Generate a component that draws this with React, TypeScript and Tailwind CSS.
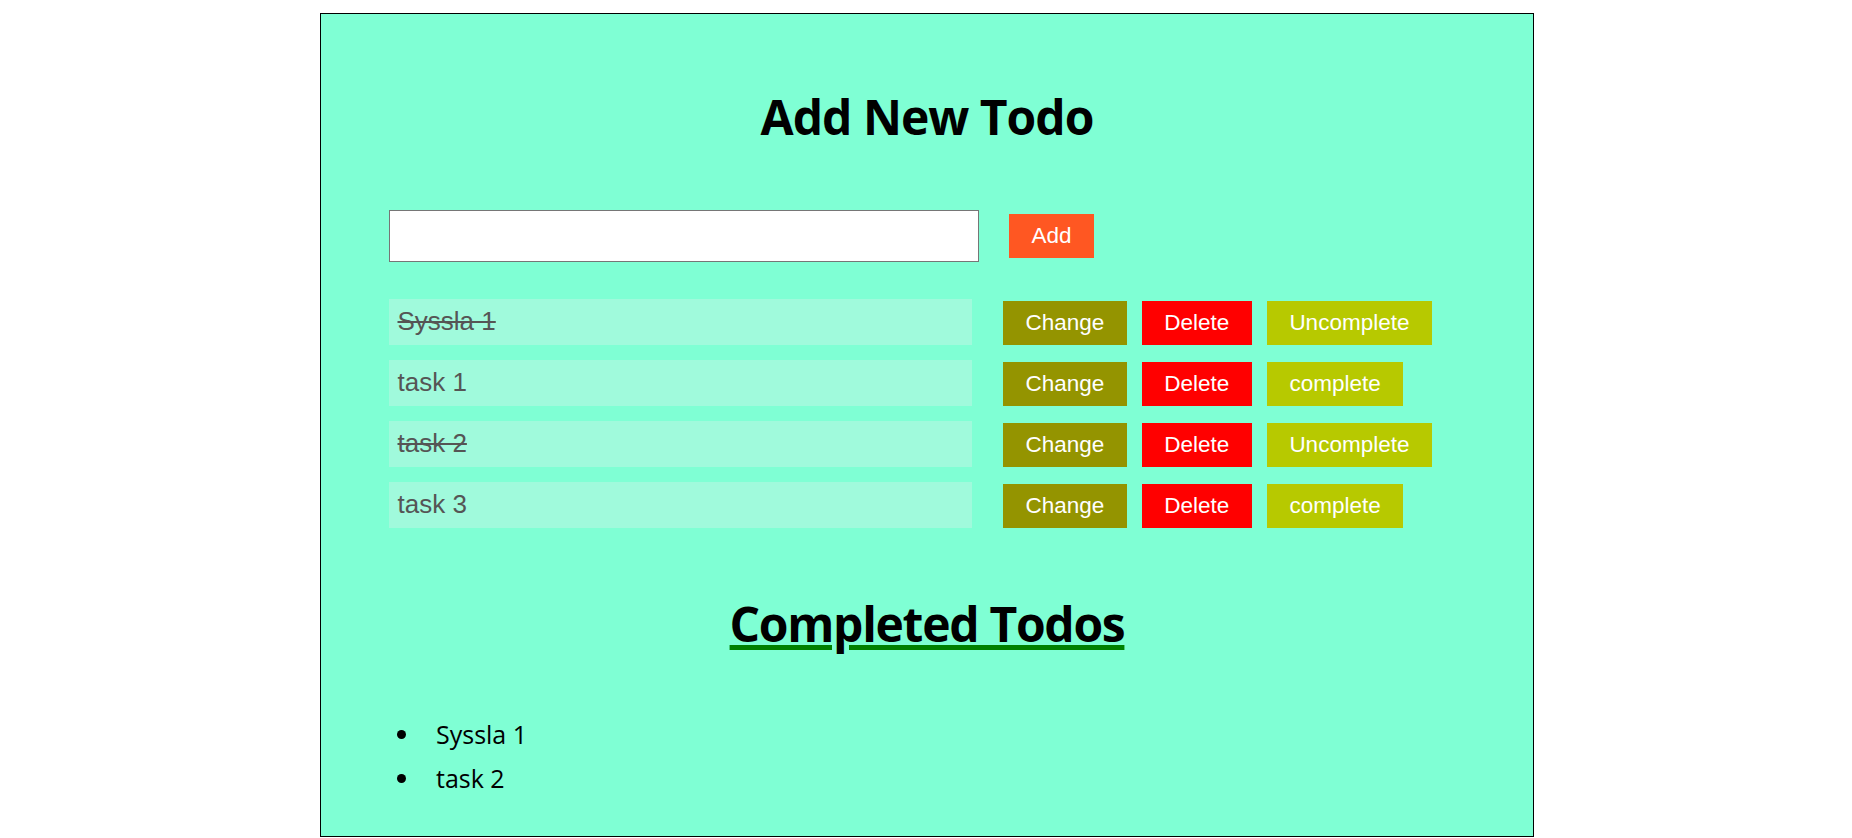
import { useState } from 'react';

type Todo = { id: number; text: string; done: boolean };

const INITIAL_TODOS: Todo[] = [
  { id: 1, text: 'Syssla 1', done: true },
  { id: 2, text: 'task 1', done: false },
  { id: 3, text: 'task 2', done: true },
  { id: 4, text: 'task 3', done: false },
];

const BUTTON_BASE =
  "px-[22.5px] py-[9px] text-[22.5px] leading-[1.149] text-white font-['Liberation_Sans',Arial,sans-serif]";

export default function App() {
  const [todos, setTodos] = useState<Todo[]>(INITIAL_TODOS);
  const [draft, setDraft] = useState('');

  function addTodo() {
    const text = draft.trim();
    if (!text) return;
    setTodos((prev) => [...prev, { id: Date.now(), text, done: false }]);
    setDraft('');
  }

  function toggle(id: number) {
    setTodos((prev) => prev.map((t) => (t.id === id ? { ...t, done: !t.done } : t)));
  }

  function remove(id: number) {
    setTodos((prev) => prev.filter((t) => t.id !== id));
  }

  function change(id: number) {
    const text = draft.trim();
    if (!text) return;
    setTodos((prev) => prev.map((t) => (t.id === id ? { ...t, text } : t)));
    setDraft('');
  }

  const completed = todos.filter((t) => t.done);

  return (
    <div className="min-h-screen bg-white pt-[13px]">
      <div className="ml-[320px] w-[1214px] border border-black bg-[#7fffd4] pb-[36px] pl-[68px] pt-[70px]">
        <h1 className="mr-[68px] text-center font-['Open_Sans',sans-serif] text-[48px] font-bold leading-[65.4px] tracking-[-1px] text-black">
          Add New Todo
        </h1>

        <div className="mt-[61px] flex items-center gap-[30px]">
          <input
            value={draft}
            onChange={(e) => setDraft(e.target.value)}
            className="h-[52px] w-[590px] border border-[#767676] bg-white px-2 text-[26px] font-['Liberation_Sans',Arial,sans-serif] outline-none"
          />
          <button type="button" onClick={addTodo} className={`${BUTTON_BASE} bg-[#ff5722]`}>
            Add
          </button>
        </div>

        <div className="mt-[37px] flex flex-col gap-[15px]">
          {todos.map((todo) => (
            <div key={todo.id} className="flex items-baseline">
              <div
                className={`w-[583px] bg-[#a0fadc] px-[8.5px] py-[8px] text-[26px] leading-[1.149] text-[#555555] font-['Liberation_Sans',Arial,sans-serif] ${
                  todo.done ? 'line-through' : ''
                }`}
              >
                {todo.text}
              </div>
              <div className="ml-[31px] flex items-baseline gap-[15px]">
                <button type="button" onClick={() => change(todo.id)} className={`${BUTTON_BASE} bg-[#949400]`}>
                  Change
                </button>
                <button type="button" onClick={() => remove(todo.id)} className={`${BUTTON_BASE} bg-[#ff0000]`}>
                  Delete
                </button>
                <button type="button" onClick={() => toggle(todo.id)} className={`${BUTTON_BASE} bg-[#b7c900]`}>
                  {todo.done ? 'Uncomplete' : 'complete'}
                </button>
              </div>
            </div>
          ))}
        </div>

        <h2 className="mr-[68px] mt-[63px] text-center font-['Open_Sans',sans-serif] text-[48px] font-bold leading-[65.4px] tracking-[-1.3px] text-black">
          <span className="underline decoration-[#008000] decoration-5 underline-offset-[3px]">Completed Todos</span>
        </h2>

        <ul className="mt-[56px] pl-[8px] font-['Open_Sans',sans-serif] text-[25px] leading-[44px] text-black">
          {completed.map((todo) => (
            <li key={todo.id} className="flex items-center">
              <span className="h-[9px] w-[9px] rounded-full bg-black" />
              <span className="ml-[30px]">{todo.text}</span>
            </li>
          ))}
        </ul>
      </div>
    </div>
  );
}
